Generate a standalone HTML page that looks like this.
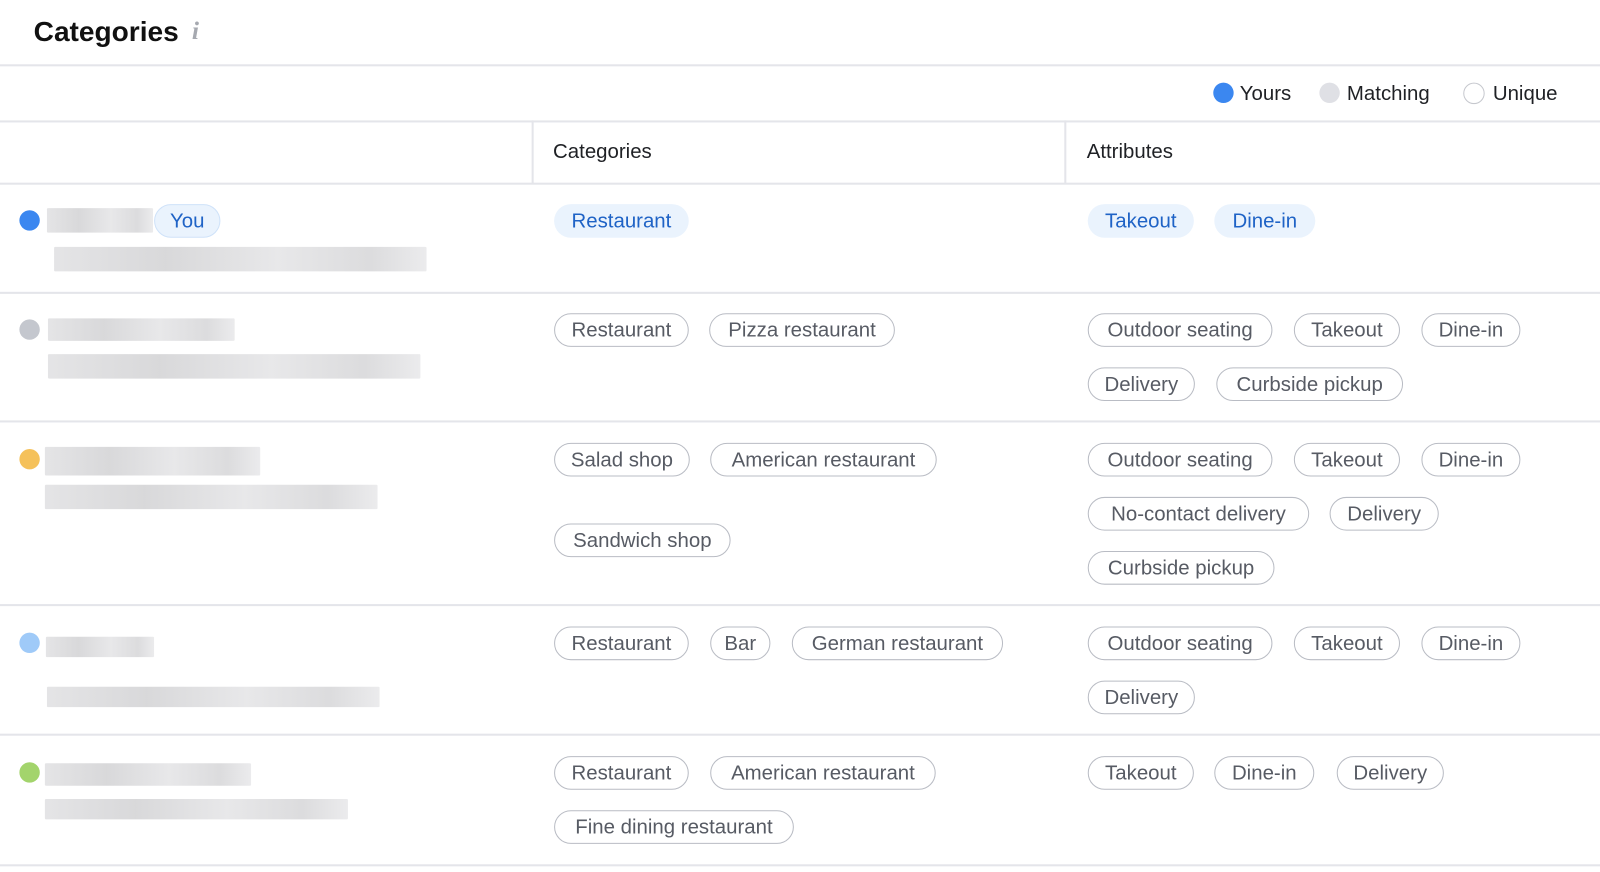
<!DOCTYPE html>
<html><head><meta charset="utf-8"><style>
*{margin:0;padding:0;box-sizing:border-box}
body{width:1600px;height:872px;background:#fff;font-family:"Liberation Sans",sans-serif;position:relative;overflow:hidden;color:#1f2125}
#w{position:absolute;left:0;top:0;width:1568px;height:855px;transform:scale(1.0204);transform-origin:0 0}
.l{position:absolute;left:0;width:1600px;height:2px;background:#e4e5ea}
.v{position:absolute;top:118px;width:2px;height:62px;background:#e4e5ea}
.c{position:absolute;height:33px;border:1.5px solid #b9bcc4;border-radius:17px;color:#575b64;font-size:20px;display:flex;align-items:center;justify-content:center;white-space:nowrap;padding-top:2px}
.b{border:none;background:#eaf3fd;color:#1f63c6}
.d{position:absolute;left:19px;width:20px;height:20px;border-radius:50%}
.bl{position:absolute;background:linear-gradient(90deg,#e0e0e2,#d2d2d4 30%,#e4e4e6 60%,#d6d6d8 85%,#e8e8ea);border-radius:1px;opacity:.85}
.h{position:absolute;font-size:20px;color:#1f2125}
</style></head><body><div id="w">
<div style="position:absolute;left:33px;top:15px;font-size:27.5px;font-weight:bold;color:#111">Categories</div>
<div style="position:absolute;left:188px;top:17px;font-size:25px;font-style:italic;font-weight:bold;color:#a6a9b0;font-family:'Liberation Serif',serif">i</div>
<div class="l" style="top:63px"></div>
<div style="position:absolute;left:1189px;top:81px;width:20px;height:20px;border-radius:50%;background:#3b87f0"></div>
<div class="h" style="left:1215px;top:81px">Yours</div>
<div style="position:absolute;left:1293px;top:81px;width:20px;height:20px;border-radius:50%;background:#dfe0e5"></div>
<div class="h" style="left:1320px;top:81px">Matching</div>
<div style="position:absolute;left:1434px;top:81px;width:21px;height:21px;border-radius:50%;border:1.5px solid #c6c8ce"></div>
<div class="h" style="left:1463px;top:81px">Unique</div>
<div class="l" style="top:118px"></div>
<div class="v" style="left:521px"></div><div class="v" style="left:1043px"></div>
<div class="h" style="left:542px;top:138px">Categories</div>
<div class="h" style="left:1065px;top:138px">Attributes</div>
<div class="l" style="top:179px"></div>
<div class="l" style="top:286px"></div>
<div class="l" style="top:412px"></div>
<div class="l" style="top:592px"></div>
<div class="l" style="top:719px"></div>
<div class="l" style="top:847px"></div>

<div class="d" style="top:206px;background:#3b87f0"></div>
<div class="bl" style="left:46px;top:204px;width:104px;height:24px"></div>
<div class="c b" style="left:151px;top:200px;width:65px;height:33px;border:1px solid #cfe2f9">You</div>
<div class="bl" style="left:53px;top:242px;width:365px;height:24px"></div>
<div class="c b" style="left:543px;top:200px;width:132px">Restaurant</div>
<div class="c b" style="left:1066px;top:200px;width:104px">Takeout</div>
<div class="c b" style="left:1190px;top:200px;width:99px">Dine-in</div>

<div class="d" style="top:313px;background:#c4c7ce"></div>
<div class="bl" style="left:47px;top:312px;width:183px;height:22px"></div>
<div class="bl" style="left:47px;top:347px;width:365px;height:24px"></div>
<div class="c" style="left:543px;top:307px;width:132px">Restaurant</div>
<div class="c" style="left:695px;top:307px;width:182px">Pizza restaurant</div>
<div class="c" style="left:1066px;top:307px;width:181px">Outdoor seating</div>
<div class="c" style="left:1268px;top:307px;width:104px">Takeout</div>
<div class="c" style="left:1393px;top:307px;width:97px">Dine-in</div>
<div class="c" style="left:1066px;top:360px;width:105px">Delivery</div>
<div class="c" style="left:1192px;top:360px;width:183px">Curbside pickup</div>

<div class="d" style="top:440px;background:#f5c15a"></div>
<div class="bl" style="left:44px;top:438px;width:211px;height:28px"></div>
<div class="bl" style="left:44px;top:475px;width:326px;height:24px"></div>
<div class="c" style="left:543px;top:434px;width:133px">Salad shop</div>
<div class="c" style="left:696px;top:434px;width:222px">American restaurant</div>
<div class="c" style="left:543px;top:513px;width:173px">Sandwich shop</div>
<div class="c" style="left:1066px;top:434px;width:181px">Outdoor seating</div>
<div class="c" style="left:1268px;top:434px;width:104px">Takeout</div>
<div class="c" style="left:1393px;top:434px;width:97px">Dine-in</div>
<div class="c" style="left:1066px;top:487px;width:217px">No-contact delivery</div>
<div class="c" style="left:1303px;top:487px;width:107px">Delivery</div>
<div class="c" style="left:1066px;top:540px;width:183px">Curbside pickup</div>

<div class="d" style="top:620px;background:#9fcaf8"></div>
<div class="bl" style="left:45px;top:624px;width:106px;height:20px"></div>
<div class="bl" style="left:46px;top:673px;width:326px;height:20px"></div>
<div class="c" style="left:543px;top:614px;width:132px">Restaurant</div>
<div class="c" style="left:696px;top:614px;width:59px">Bar</div>
<div class="c" style="left:776px;top:614px;width:207px">German restaurant</div>
<div class="c" style="left:1066px;top:614px;width:181px">Outdoor seating</div>
<div class="c" style="left:1268px;top:614px;width:104px">Takeout</div>
<div class="c" style="left:1393px;top:614px;width:97px">Dine-in</div>
<div class="c" style="left:1066px;top:667px;width:105px">Delivery</div>

<div class="d" style="top:747px;background:#a3d46c"></div>
<div class="bl" style="left:44px;top:748px;width:202px;height:22px"></div>
<div class="bl" style="left:44px;top:783px;width:297px;height:20px"></div>
<div class="c" style="left:543px;top:741px;width:132px">Restaurant</div>
<div class="c" style="left:696px;top:741px;width:221px">American restaurant</div>
<div class="c" style="left:543px;top:794px;width:235px">Fine dining restaurant</div>
<div class="c" style="left:1066px;top:741px;width:104px">Takeout</div>
<div class="c" style="left:1190px;top:741px;width:98px">Dine-in</div>
<div class="c" style="left:1310px;top:741px;width:105px">Delivery</div>
</div></body></html>
